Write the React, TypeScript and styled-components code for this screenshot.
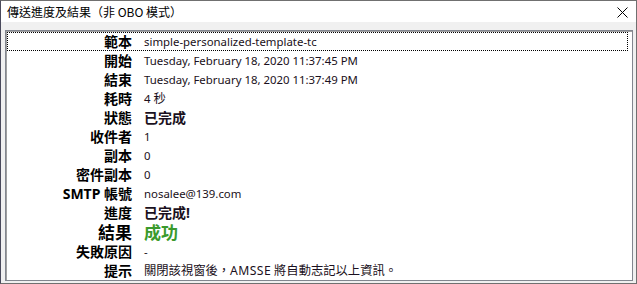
import React from "react";
import styled, { createGlobalStyle } from "styled-components";

const Global = createGlobalStyle`
  html, body { margin: 0; padding: 0; background: #ffffff; }
  body { font-family: "Noto Sans", "Noto Sans CJK TC", sans-serif; text-spacing-trim: space-all; }
`;

const Window = styled.div`
  box-sizing: border-box;
  width: 637px;
  height: 284px;
  border: 1px solid #707070;
  border-left-color: #4a4a5c;
  display: flex;
  flex-direction: column;
  background: #f0f0f0;
`;

const TitleBar = styled.div`
  height: 21px;
  flex: none;
  background: #ffffff;
  display: flex;
  align-items: center;
  justify-content: space-between;
  padding: 0 8px 0 6px;
`;

const Title = styled.span`
  font-family: "Noto Sans CJK TC", sans-serif;
  font-size: 12px;
  color: #000;
  line-height: 1;
`;

const CloseButton = styled.div`
  width: 12px;
  height: 12px;
  display: flex;
  align-items: center;
  justify-content: center;
  margin-top: 2px;
`;

const Body = styled.div`
  flex: 1;
  padding: 8px 3px 2px 4px;
  display: flex;
`;

const ListBox = styled.div`
  flex: 1;
  background: #ffffff;
  border: 1px solid #82868f;
  box-shadow: inset 1px 1px 0 #a0a0a0;
  padding: 1px 3px 0 1px;
  display: flex;
  flex-direction: column;
`;

const Row = styled.div<{ $focused?: boolean; $tall?: boolean }>`
  display: grid;
  grid-template-columns: 124px 1fr;
  column-gap: 12px;
  align-items: center;
  height: ${(p) => (p.$tall ? 20 : 19)}px;
  box-sizing: border-box;
  border: 1px dotted ${(p) => (p.$focused ? "#000" : "transparent")};
  margin-right: 1px;
`;

const Label = styled.span<{ $big?: boolean }>`
  text-align: right;
  font-family: "Noto Sans", "Noto Sans CJK TC", sans-serif;
  font-weight: 700;
  font-size: ${(p) => (p.$big ? 17 : 14)}px;
  color: #000;
  line-height: 1;
`;

const Value = styled.span<{ $bold?: boolean; $big?: boolean; $color?: string }>`
  font-family: "Noto Sans", "Noto Sans CJK TC", sans-serif;
  font-weight: ${(p) => (p.$bold ? 700 : 400)};
  font-size: ${(p) => (p.$big ? 17 : p.$bold ? 14 : 11.4)}px;
  color: ${(p) => p.$color ?? "#1a1020"};
  line-height: 1;
  white-space: nowrap;
`;

const Cjk = styled.span`
  font-family: "Noto Sans CJK TC", sans-serif;
  font-size: 12.3px;
`;

const WideLatin = styled.span`
  font-size: 12.2px;
  letter-spacing: 0.4px;
`;

type Item = {
  label: string;
  value: React.ReactNode;
  bold?: boolean;
  big?: boolean;
  color?: string;
};

const items: Item[] = [
  { label: "範本", value: "simple-personalized-template-tc" },
  { label: "開始", value: "Tuesday, February 18, 2020 11:37:45 PM" },
  { label: "結束", value: "Tuesday, February 18, 2020 11:37:49 PM" },
  { label: "耗時", value: <>4 <Cjk>秒</Cjk></> },
  { label: "狀態", value: "已完成", bold: true },
  { label: "收件者", value: "1" },
  { label: "副本", value: "0" },
  { label: "密件副本", value: "0" },
  { label: "SMTP 帳號", value: "nosalee@139.com" },
  { label: "進度", value: "已完成!", bold: true },
  { label: "結果", value: "成功", bold: true, big: true, color: "#3a9a2c" },
  { label: "失敗原因", value: "-" },
  {
    label: "提示",
    value: (
      <>
        <Cjk>關閉該視窗後，</Cjk>
        <WideLatin>AMSSE</WideLatin> <Cjk>將自動志記以上資訊。</Cjk>
      </>
    ),
  },
];

export default function App() {
  return (
    <>
      <Global />
      <Window>
        <TitleBar>
          <Title>傳送進度及結果（非 OBO 模式）</Title>
          <CloseButton>
            <svg width="11" height="11" viewBox="0 0 11 11">
              <path d="M0.5 0.5 L10.5 10.5 M10.5 0.5 L0.5 10.5" stroke="#000" strokeWidth="1" />
            </svg>
          </CloseButton>
        </TitleBar>
        <Body>
          <ListBox>
            {items.map((it, i) => (
              <Row key={it.label} $focused={i === 0} $tall={it.big}>
                <Label $big={it.big}>{it.label}</Label>
                <Value $bold={it.bold} $big={it.big} $color={it.color}>
                  {it.value}
                </Value>
              </Row>
            ))}
          </ListBox>
        </Body>
      </Window>
    </>
  );
}
